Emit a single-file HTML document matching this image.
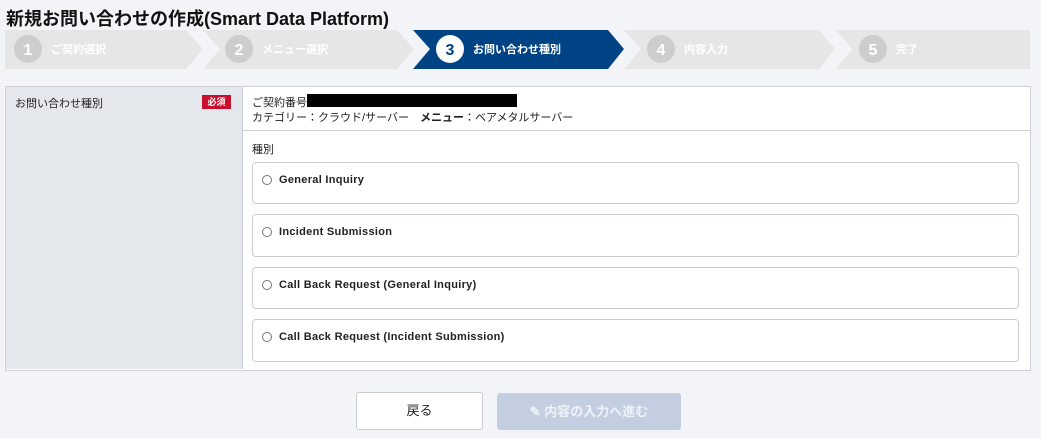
<!DOCTYPE html>
<html><head><meta charset="utf-8"><style>
body{margin:0;width:1041px;height:438px;background:#f3f4f8;font-family:"Liberation Sans","Noto Sans CJK JP",sans-serif;color:#222;position:relative;overflow:hidden}
.a{position:absolute}
.opt{position:absolute;left:252px;width:767px;height:41px;background:#fff;border:1px solid #c9ccd2;border-radius:4px;box-sizing:border-box}
.opt span{position:absolute;left:9px;top:12px;width:8px;height:8px;border:1px solid #777;border-radius:50%}
.opt b{position:absolute;left:26px;top:11px;font-size:11px;letter-spacing:.3px}
</style></head><body>
<div class="a" style="left:6px;top:5px;font-size:18px;font-weight:bold;color:#111">新規お問い合わせの作成(Smart Data Platform)</div>
<svg class="a" style="left:0;top:0" width="1041" height="80">
<polygon points="5,30 186,30 203,49 186,69 5,69" fill="#e6e6e6"/>
<polygon points="203,30 397,30 414,49 397,69 203,69 220,49" fill="#e6e6e6"/>
<polygon points="413,30 608,30 624,49 608,69 413,69 430,49" fill="#004385"/>
<polygon points="624,30 819,30 835,49 819,69 624,69 641,49" fill="#e6e6e6"/>
<polygon points="836,30 1030,30 1030,69 836,69 852,49" fill="#e6e6e6"/>
<circle cx="28" cy="49" r="14" fill="#cdcdcd"/><circle cx="239" cy="49" r="14" fill="#cdcdcd"/>
<circle cx="450" cy="49" r="14" fill="#fff"/><circle cx="661" cy="49" r="14" fill="#cdcdcd"/><circle cx="873" cy="49" r="14" fill="#cdcdcd"/>
<g font-family="Liberation Sans" font-weight="bold" font-size="16" text-anchor="middle">
<text x="28" y="55" fill="#fff">1</text><text x="239" y="55" fill="#fff">2</text><text x="450" y="55" fill="#004385">3</text><text x="661" y="55" fill="#fff">4</text><text x="873" y="55" fill="#fff">5</text></g>
<g font-family="Liberation Sans,Noto Sans CJK JP,sans-serif" font-weight="bold" font-size="11" fill="#fff">
<text x="51" y="53">ご契約選択</text><text x="262" y="53">メニュー選択</text><text x="473" y="53">お問い合わせ種別</text><text x="684" y="53">内容入力</text><text x="896" y="53">完了</text></g>
</svg>
<div class="a" style="left:5px;top:86px;width:1024px;height:283px;border:1px solid #cdd0d6;background:#fff"></div>
<div class="a" style="left:6px;top:87px;width:236px;height:282px;background:#e4e7ec;border-right:1px solid #cdd0d6"></div>
<div class="a" style="left:15px;top:95px;font-size:11px">お問い合わせ種別</div>
<div class="a" style="left:202px;top:95px;width:29px;height:14px;background:#c8102e;color:#fff;font-size:9px;font-weight:bold;text-align:center;line-height:14px">必須</div>
<div class="a" style="left:252px;top:94px;font-size:11px">ご契約番号</div>
<div class="a" style="left:307px;top:94px;width:210px;height:13px;background:#000"></div>
<div class="a" style="left:252px;top:109px;font-size:11px">カテゴリー：クラウド/サーバー　<b>メニュー</b>：ベアメタルサーバー</div>
<div class="a" style="left:243px;top:130px;width:787px;height:1px;background:#cdd0d6"></div>
<div class="a" style="left:252px;top:141px;font-size:11px">種別</div>
<div class="opt" style="top:162px;height:42px"><span></span><b>General Inquiry</b></div>
<div class="opt" style="top:214px;height:43px"><span></span><b>Incident Submission</b></div>
<div class="opt" style="top:267px;height:42px"><span></span><b>Call Back Request (General Inquiry)</b></div>
<div class="opt" style="top:319px;height:43px"><span></span><b>Call Back Request (Incident Submission)</b></div>
<div class="a" style="left:356px;top:392px;width:127px;height:38px;background:#fff;border:1px solid #c9ccd2;border-radius:3px;box-sizing:border-box;text-align:center;line-height:36px;font-size:13px">戻る</div>
<div class="a" style="left:497px;top:393px;width:184px;height:37px;background:#c3cfe0;border-radius:3px;text-align:center;line-height:37px;font-size:13px;font-weight:bold;color:#eef2f8">✎ 内容の入力へ進む</div>
</body></html>
